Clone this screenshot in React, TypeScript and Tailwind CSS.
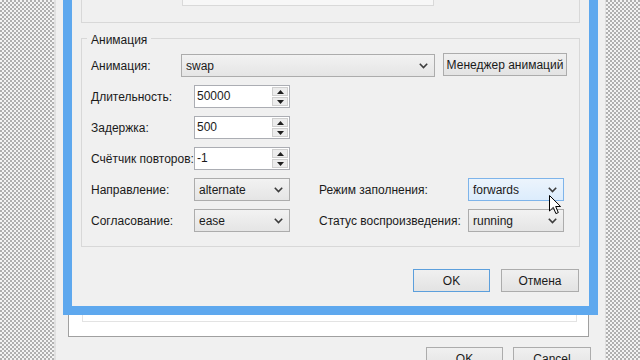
import React from "react";

function Chevron() {
    return (
        <svg width="9" height="6" viewBox="0 0 9 6">
            <polyline points="0.8,0.8 4.5,4.6 8.2,0.8" fill="none" stroke="#3c3c3c" strokeWidth="1.6"/>
        </svg>
    )
}

function Combo({value, className, hover}: { value: string, className: string, hover?: boolean }) {
    return (
        <div className={
            "flex h-[23px] items-center justify-between border pl-[4px] pr-[6px] " + className + " " +
            (hover ? "border-[#7eb4ea] bg-gradient-to-b from-[#ecf4fc] to-[#dcecfc]" : "border-[#acacac] bg-gradient-to-b from-[#f2f2f2] to-[#e5e5e5]")
        }>
            <span>{value}</span>
            <Chevron/>
        </div>
    )
}

function Spin({value}: { value: string }) {
    return (
        <div className="flex h-[23px] w-[96px] border border-[#abadb3] bg-white">
            <div className="flex-1 pl-[2px] leading-[21px]">{value}</div>
            <div className="m-[1px] flex w-[16px] flex-col gap-[1px]">
                <div className="flex flex-1 items-center justify-center border border-[#cfcfcf] bg-[#ececec]">
                    <svg width="7" height="4" viewBox="0 0 7 4"><path d="M0 4 L3.5 0 L7 4Z" fill="#1e1e1e"/></svg>
                </div>
                <div className="flex flex-1 items-center justify-center border border-[#cfcfcf] bg-[#ececec]">
                    <svg width="7" height="4" viewBox="0 0 7 4"><path d="M0 0 L3.5 4 L7 0Z" fill="#1e1e1e"/></svg>
                </div>
            </div>
        </div>
    )
}

function Btn({children, def, className}: { children: React.ReactNode, def?: boolean, className: string }) {
    return (
        <div className={
            "flex h-[23px] items-center justify-center border bg-gradient-to-b from-[#f0f0f0] to-[#e3e3e3] " + className + " " +
            (def ? "border-[#5c9fdc]" : "border-[#acacac]")
        }>
            {children}
        </div>
    )
}

export default function App() {
    return (
        <div className="relative h-[360px] w-[640px] overflow-hidden bg-[repeating-conic-gradient(#b0b0b0_0_25%,#f4f4f4_0_50%)] bg-[length:4px_4px] font-['Liberation_Sans',Arial,sans-serif] text-[12px] text-[#1a1a1a]">
            {/* parent window */}
            <div className="absolute left-[54px] top-0 flex h-[374px] w-[552px] flex-col border-l-[2px] border-r-[1px] border-[#e0e0e0] bg-[#f0f0f0]">
                <div className="ml-[12px] mr-[16px] flex flex-1 flex-col border border-[#a0a0a0] bg-white">
                    <div className="ml-[13px] mr-[11px] mb-[14px] flex-1 border border-[#e3e3e3]"/>
                </div>
                <div className="mb-[4px] mr-[14px] mt-[10px] flex justify-end gap-[10px]">
                    <Btn className="w-[77px]">OK</Btn>
                    <Btn className="w-[78px]">Cancel</Btn>
                </div>
            </div>

            {/* dialog */}
            <div className="absolute left-[63px] top-[-60px] flex h-[375px] w-[535px] flex-col justify-end border-[9px] border-[#5ea8ee] bg-[#f0f0f0] px-[9px] pb-[14px]">
                <div className="flex h-[60px] items-end border border-[#d8d8d8] pb-[16px] pl-[9px]">
                    <div className="flex items-center">
                        <span className="w-[91px]">ID:</span>
                        <div className="h-[22px] w-[252px] border border-[#d9d9d9] bg-[#f7f7f7] pl-[3px] leading-[20px] text-[#8a8a8a]">banner1</div>
                    </div>
                </div>

                <div className="relative mt-[15px] flex h-[209px] flex-col gap-[8px] border border-[#d8d8d8] pl-[9px] pt-[15px]">
                    <span className="absolute -top-[8px] left-[5px] bg-[#f0f0f0] px-[4px]">Анимация</span>
                    <div className="flex h-[23px] items-center">
                        <span className="w-[90px]">Анимация:</span>
                        <Combo value="swap" className="w-[254px]"/>
                        <Btn className="ml-[8px] -mt-[2px] h-[21px] w-[124px]">Менеджер анимаций</Btn>
                    </div>
                    <div className="flex h-[23px] items-center">
                        <span className="w-[103px]">Длительность:</span>
                        <Spin value="50000"/>
                    </div>
                    <div className="flex h-[23px] items-center">
                        <span className="w-[103px]">Задержка:</span>
                        <Spin value="500"/>
                    </div>
                    <div className="flex h-[23px] items-center">
                        <span className="w-[103px]">Счётчик повторов:</span>
                        <Spin value="-1"/>
                    </div>
                    <div className="flex h-[23px] items-center">
                        <span className="w-[103px]">Направление:</span>
                        <Combo value="alternate" className="w-[96px]"/>
                        <span className="ml-[29px] w-[149px]">Режим заполнения:</span>
                        <Combo value="forwards" className="w-[96px]" hover/>
                    </div>
                    <div className="flex h-[23px] items-center">
                        <span className="w-[103px]">Согласование:</span>
                        <Combo value="ease" className="w-[96px]"/>
                        <span className="ml-[29px] w-[149px]">Статус воспроизведения:</span>
                        <Combo value="running" className="w-[96px]"/>
                    </div>
                </div>

                <div className="mt-[22px] flex justify-end gap-[11px] pr-[1px]">
                    <Btn className="w-[77px]" def>OK</Btn>
                    <Btn className="w-[78px]">Отмена</Btn>
                </div>
            </div>

            {/* mouse cursor */}
            <svg className="absolute left-[549px] top-[195px]" width="14" height="21" viewBox="0 0 14 21">
                <path d="M0.5 0.5 L0.5 16 L4.3 12.4 L6.9 18.6 L9.3 17.6 L6.7 11.5 L11.6 11.5 Z" fill="white" stroke="black" strokeWidth="1" strokeLinejoin="round"/>
            </svg>
        </div>
    )
}
